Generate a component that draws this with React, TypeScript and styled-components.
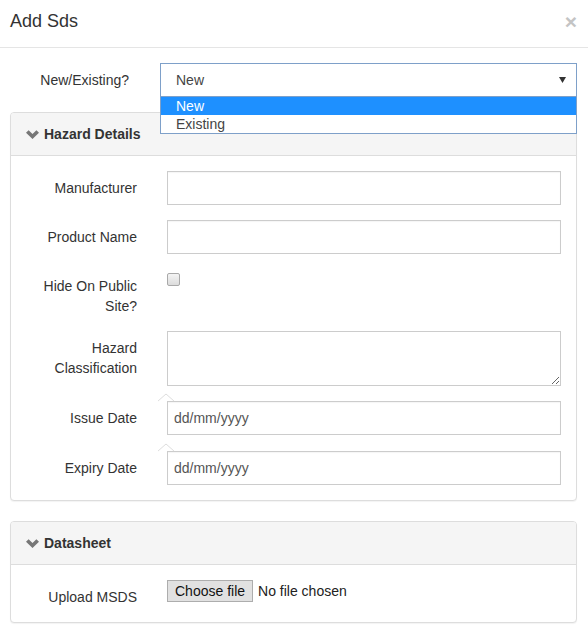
import React from "react";
import styled, { createGlobalStyle } from "styled-components";

const Global = createGlobalStyle`
  html, body { margin: 0; padding: 0; background: #fff; }
  body {
    font-family: "Liberation Sans", Arial, sans-serif;
    font-size: 14px;
    line-height: 20px;
    color: #333;
  }
  * { box-sizing: border-box; }
`;

const Modal = styled.div`
  width: 588px;
  background: #fff;
`;

const Header = styled.div`
  display: flex;
  align-items: center;
  justify-content: space-between;
  padding: 8px 11px 13px 10px;
  border-bottom: 1px solid #e5e5e5;
`;

const Title = styled.h4`
  margin: 0;
  font-size: 18px;
  font-weight: normal;
  line-height: 26px;
  color: #333;
`;

const Close = styled.button`
  border: 0;
  background: transparent;
  padding: 0;
  font-family: "Liberation Sans", Arial, sans-serif;
  font-size: 21px;
  font-weight: bold;
  line-height: 1;
  color: #c4c4c4;
  cursor: pointer;
`;

const Body = styled.div`
  padding: 15px 11px 15px 15px;
  display: flex;
  flex-direction: column;
`;

const Row = styled.div<{ $labelW: number; $gap: number; $mt?: number }>`
  display: grid;
  grid-template-columns: ${(p) => p.$labelW}px 1fr;
  column-gap: ${(p) => p.$gap}px;
  align-items: start;
  margin-top: ${(p) => p.$mt ?? 0}px;
`;

const Label = styled.label`
  text-align: right;
  padding-top: 7px;
  line-height: 20px;
  color: #333;
`;

const Field = styled.div`
  position: relative;
`;

const SelectBox = styled.div`
  height: 34px;
  border: 1px solid #7ea0c9;
  padding: 0 10px 0 15px;
  display: flex;
  align-items: center;
  justify-content: space-between;
  color: #444;
  background: #fff;
`;

const Options = styled.ul`
  position: absolute;
  left: 0;
  right: 0;
  top: 34px;
  margin: 0;
  padding: 0;
  list-style: none;
  background: #fff;
  border: 1px solid #7ea0c9;
  border-top: 0;
  z-index: 10;
`;

const Option = styled.li<{ $active?: boolean }>`
  height: 18px;
  line-height: 18px;
  padding-left: 15px;
  font-size: 14px;
  background: ${(p) => (p.$active ? "#1e90ff" : "#fff")};
  color: ${(p) => (p.$active ? "#fff" : "#444")};
`;

const Panel = styled.section<{ $mb?: number }>`
  border: 1px solid #ddd;
  border-radius: 4px;
  margin-left: -5px;
  margin-bottom: ${(p) => p.$mb ?? 0}px;
  box-shadow: 0 1px 1px rgba(0, 0, 0, 0.05);
  background: #fff;
`;

const PanelHeading = styled.div`
  background: #f5f5f5;
  border-bottom: 1px solid #ddd;
  border-radius: 3px 3px 0 0;
  padding: 11px 15px;
  display: flex;
  align-items: center;
  gap: 5px;
  line-height: 20px;
`;

const PanelTitle = styled.h3`
  margin: 0;
  font-size: 14px;
  font-weight: bold;
  line-height: 20px;
  color: #333;
`;

const PanelBody = styled.div`
  padding: 15px 15px;
  display: flex;
  flex-direction: column;
  gap: 15px;
`;

const Input = styled.input`
  display: block;
  width: 100%;
  height: 34px;
  border: 1px solid #ccc;
  border-radius: 0;
  padding: 6px;
  font-family: "Liberation Sans", Arial, sans-serif;
  font-size: 14px;
  color: #555;
  background: #fff;
  box-shadow: inset 0 1px 1px rgba(0, 0, 0, 0.04);
  &::placeholder { color: #555; }
`;

const TextArea = styled.textarea`
  display: block;
  width: 100%;
  height: 55px;
  border: 1px solid #ccc;
  border-radius: 0;
  padding: 6px;
  font-family: "Liberation Sans", Arial, sans-serif;
  font-size: 14px;
  color: #555;
  resize: vertical;
`;

const Check = styled.input`
  appearance: none;
  -webkit-appearance: none;
  display: block;
  width: 13px;
  height: 13px;
  margin: 4px 0 0 0;
  border: 1px solid #a9a9a9;
  border-radius: 2px;
  background: linear-gradient(#f4f4f4, #dcdcdc);
`;

const CaretMark = styled.svg`
  position: absolute;
  left: -10px;
  top: -8px;
`;

const FileWrap = styled.div`
  display: flex;
  align-items: center;
  gap: 5px;
  height: 22px;
`;

const FileButton = styled.button`
  height: 22px;
  padding: 0 7px;
  border: 1px solid #adadad;
  border-radius: 0;
  background: #e1e1e1;
  font-family: "Liberation Sans", Arial, sans-serif;
  font-size: 14px;
  color: #111;
  line-height: 20px;
`;

const FileText = styled.span`
  font-size: 14px;
  color: #222;
`;

const Chevron = () => (
  <svg width="13" height="9" viewBox="0 0 13 9" aria-hidden>
    <path d="M0 2.8 L2.6 0.2 L6.5 4 L10.4 0.2 L13 2.8 L6.5 9 Z" fill="#777" />
  </svg>
);

const Caret = () => (
  <CaretMark width="18" height="9" viewBox="0 0 18 9" aria-hidden>
    <path d="M1 8 L9 1 L17 8" fill="none" stroke="#dedede" strokeWidth="1" />
  </CaretMark>
);

const DateField = () => (
  <Field>
    <Caret />
    <Input placeholder="dd/mm/yyyy" />
  </Field>
);

export default function App() {
  return (
    <Modal>
      <Global />
      <Header>
        <Title>Add Sds</Title>
        <Close aria-label="Close">×</Close>
      </Header>
      <Body>
        <Row $labelW={114} $gap={31} style={{ marginBottom: 15 }}>
          <Label>New/Existing?</Label>
          <Field>
            <SelectBox>
              <span>New</span>
              <svg width="7" height="6" viewBox="0 0 7 6" aria-hidden>
                <path d="M0 0 H7 L3.5 6 Z" fill="#333" />
              </svg>
            </SelectBox>
            <Options>
              <Option $active>New</Option>
              <Option>Existing</Option>
            </Options>
          </Field>
        </Row>

        <Panel $mb={20}>
          <PanelHeading>
            <Chevron />
            <PanelTitle>Hazard Details</PanelTitle>
          </PanelHeading>
          <PanelBody>
            <Row $labelW={111} $gap={30}>
              <Label>Manufacturer</Label>
              <Input />
            </Row>
            <Row $labelW={111} $gap={30}>
              <Label>Product Name</Label>
              <Input />
            </Row>
            <Row $labelW={111} $gap={30}>
              <Label>Hide On Public Site?</Label>
              <Check type="checkbox" />
            </Row>
            <Row $labelW={111} $gap={30}>
              <Label>Hazard Classification</Label>
              <TextArea />
            </Row>
            <Row $labelW={111} $gap={30}>
              <Label>Issue Date</Label>
              <DateField />
            </Row>
            <Row $labelW={111} $gap={30} $mt={1}>
              <Label>Expiry Date</Label>
              <DateField />
            </Row>
          </PanelBody>
        </Panel>

        <Panel>
          <PanelHeading>
            <Chevron />
            <PanelTitle>Datasheet</PanelTitle>
          </PanelHeading>
          <PanelBody>
            <Row $labelW={111} $gap={30}>
              <Label>Upload MSDS</Label>
              <FileWrap>
                <FileButton type="button">Choose file</FileButton>
                <FileText>No file chosen</FileText>
              </FileWrap>
            </Row>
          </PanelBody>
        </Panel>
      </Body>
    </Modal>
  );
}
